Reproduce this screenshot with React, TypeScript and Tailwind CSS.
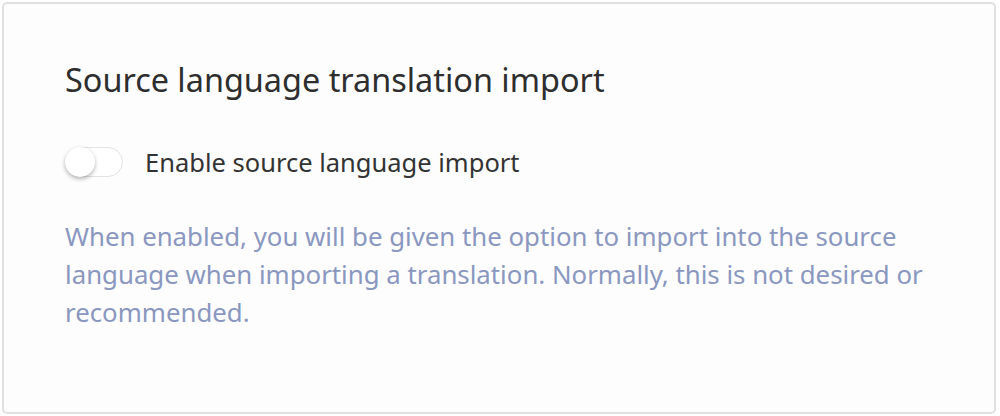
import { useState } from "react"

const App = () => {
  const [enabled, setEnabled] = useState(false)

  return (
    <div className="w-[1000px] h-[416px] bg-white p-[2px] font-['Noto_Sans',sans-serif]">
      <div className="h-[412px] w-[994px] rounded-[5px] border-2 border-[#e0e0e0] bg-[#fdfdfd] px-[61px] pt-[55px]">
        <h2 className="text-[32.4px] leading-[40px] font-normal text-[#2e2e2e]">Source language translation import</h2>
        <div className="mt-[48px] flex items-center gap-[22px]">
          <button
            className="relative h-[30px] w-[58px] rounded-full border border-[#e3e3e3] bg-white"
            onClick={() => setEnabled(!enabled)}
          >
            <span
              className={`absolute top-[-1px] h-[30px] w-[30px] rounded-full bg-white shadow-[0_2px_4px_rgba(0,0,0,0.3)] ${enabled ? "left-[27px]" : "left-[-1px]"}`}
            />
          </button>
          <span className="text-[25.5px] leading-[30px] text-[#333]">Enable source language import</span>
        </div>
        <p className="mt-[40px] text-[25.8px] leading-[38px] text-[#8a97c0]">
          When enabled, you will be given the option to import into the source language when importing a translation. Normally, this is not desired or recommended.
        </p>
      </div>
    </div>
  )
}

export default App
